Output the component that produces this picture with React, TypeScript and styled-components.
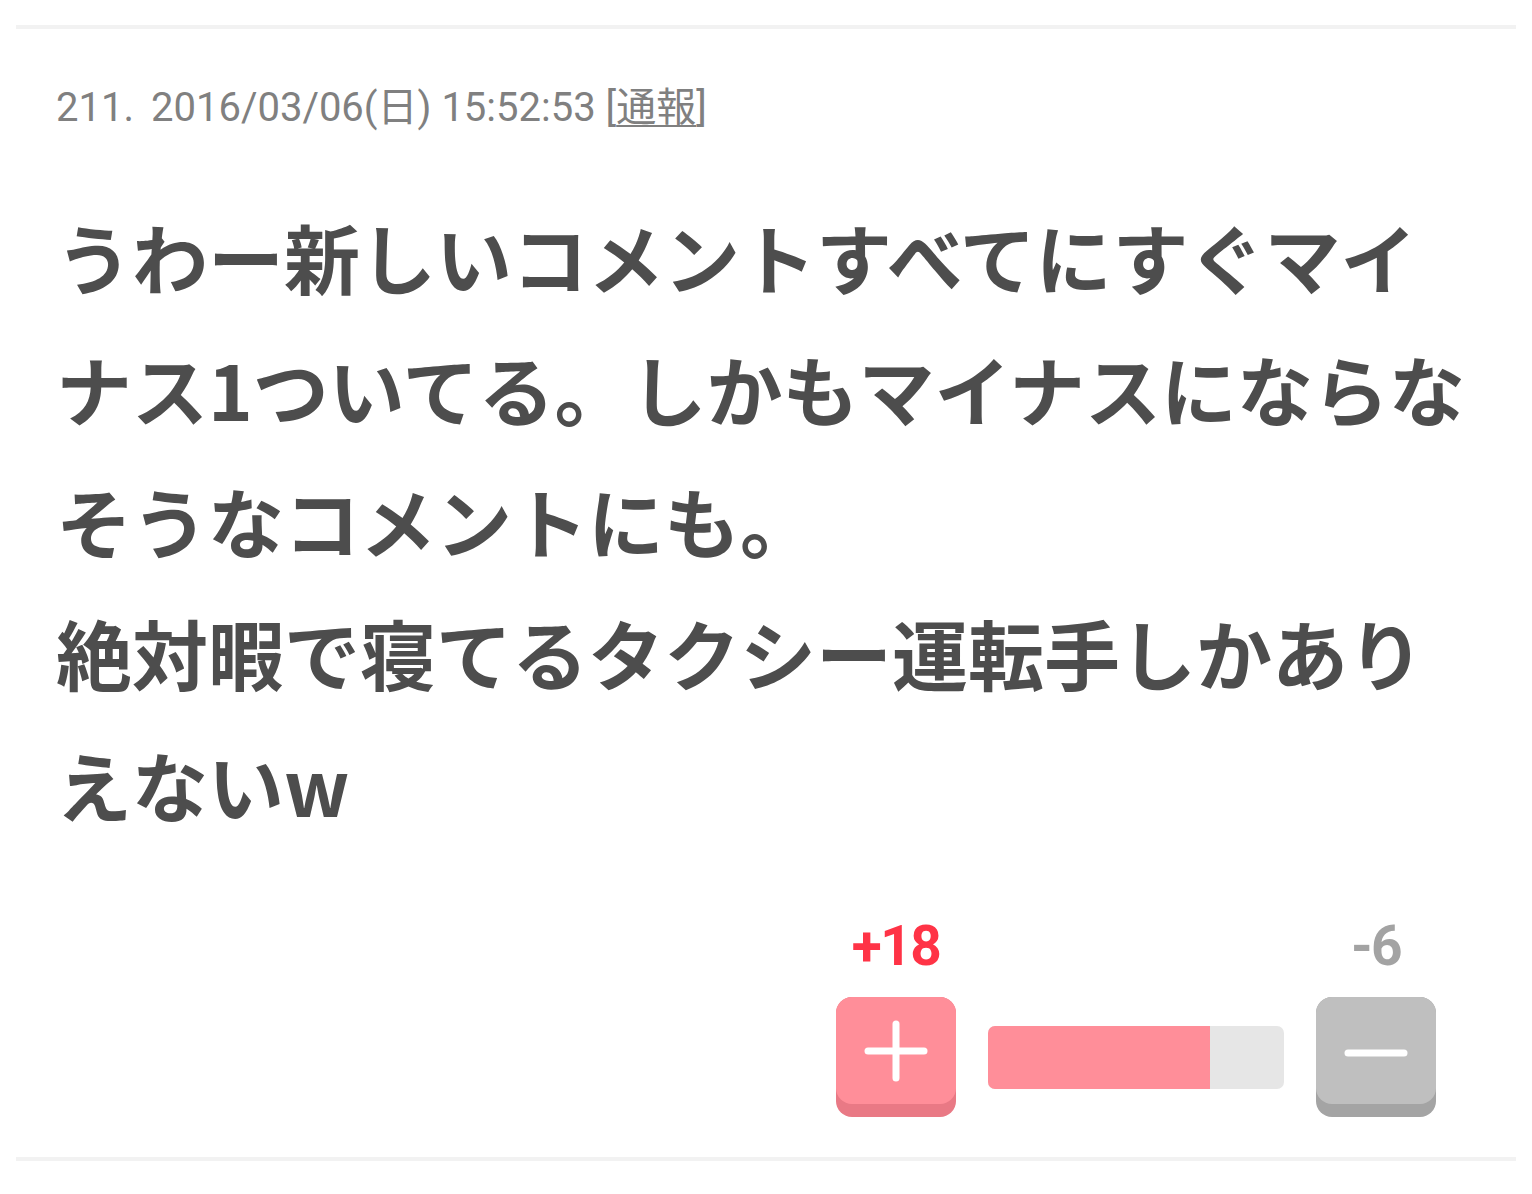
import React from "react"
import styled, { createGlobalStyle } from "styled-components"

const GlobalStyle = createGlobalStyle`
  html, body {
    margin: 0;
    padding: 0;
    background: #ffffff;
  }
`

const Page = styled.div`
  padding-top: 25px;
  padding-left: 16px;
  padding-right: 16px;
`

const Comment = styled.article`
  border-top: 4px solid #f2f2f2;
  border-bottom: 4px solid #f2f2f2;
  padding: 55px 44px 40px 40px;
`

const Meta = styled.div`
  font-family: Roboto, "Noto Sans CJK JP", sans-serif;
  font-size: 40px;
  line-height: 48px;
  height: 48px;
  color: #808080;
  white-space: nowrap;
`

const Num = styled.span`
  margin-right: 17px;
`

const Report = styled.a`
  color: #808080;
  text-decoration: none;

  span {
    text-decoration: underline;
    text-underline-offset: 4px;
    text-decoration-thickness: 2px;
  }
`

const Body = styled.p`
  margin: 58px 0 0;
  font-family: "Noto Sans CJK JP", "Noto Sans", sans-serif;
  font-weight: 700;
  font-size: 76px;
  line-height: 132px;
  color: #4d4d4d;
  white-space: pre-line;
  word-break: break-all;
`

const Votes = styled.div`
  margin-top: 66px;
  display: flex;
  justify-content: flex-end;
  padding-right: 36px;
`

const VoteGrid = styled.div`
  display: grid;
  grid-template-columns: 120px 296px 120px;
  grid-template-rows: 60px 120px;
  column-gap: 32px;
  row-gap: 21px;
`

const Count = styled.div<{ $tone: "plus" | "minus"; $col: number }>`
  grid-column: ${(p) => p.$col};
  grid-row: 1;
  text-align: center;
  font-family: Roboto, sans-serif;
  font-weight: 700;
  font-size: 55px;
  line-height: 60px;
  letter-spacing: -1.5px;
  color: ${(p) => (p.$tone === "plus" ? "#ff3346" : "#a3a3a3")};
`

const VoteButton = styled.button<{ $tone: "plus" | "minus"; $col: number }>`
  grid-row: 2;
  grid-column: ${(p) => p.$col};
  width: 120px;
  height: 120px;
  border: 0;
  padding: 0 0 13px;
  border-radius: 16px;
  cursor: pointer;
  background: ${(p) => (p.$tone === "plus" ? "#e97985" : "#a4a4a4")};
  display: flex;
  align-items: flex-start;
`

const Face = styled.span<{ $tone: "plus" | "minus" }>`
  width: 120px;
  height: 107px;
  border-radius: 16px;
  background: ${(p) => (p.$tone === "plus" ? "#ff8e99" : "#bfbfbf")};
  display: flex;
  align-items: center;
  justify-content: center;
`

const Meter = styled.div`
  grid-row: 2;
  grid-column: 2;
  align-self: center;
  height: 63px;
  border-radius: 7px;
  background: #e6e6e6;
  overflow: hidden;
  display: flex;
`

const MeterFill = styled.div`
  height: 100%;
  background: #ff8e99;
`

const PlusIcon = () => (
  <svg width="64" height="64" viewBox="0 0 64 64">
    <g stroke="#ffffff" strokeWidth="7" strokeLinecap="round">
      <line x1="4" y1="32" x2="60" y2="32" />
      <line x1="32" y1="5" x2="32" y2="59" />
    </g>
  </svg>
)

const MinusIcon = () => (
  <svg width="64" height="64" viewBox="0 0 64 64">
    <line x1="4" y1="34" x2="60" y2="34" stroke="#ffffff" strokeWidth="7" strokeLinecap="round" />
  </svg>
)

const plus = 18
const minus = 6

export default function App() {
  const ratio = (plus / (plus + minus)) * 100
  return (
    <>
      <GlobalStyle />
      <Page>
        <Comment>
          <Meta>
            <Num>211.</Num>2016/03/06(日) 15:52:53{" "}
            <Report href="#">
              [<span>通報</span>]
            </Report>
          </Meta>
          <Body>
            {"うわー新しいコメントすべてにすぐマイナス1ついてる。しかもマイナスにならなそうなコメントにも。\n絶対暇で寝てるタクシー運転手しかありえないw"}
          </Body>
          <Votes>
            <VoteGrid>
              <Count $tone="plus" $col={1}>+{plus}</Count>
              <Count $tone="minus" $col={3}>-{minus}</Count>
              <VoteButton $tone="plus" $col={1}>
                <Face $tone="plus">
                  <PlusIcon />
                </Face>
              </VoteButton>
              <Meter>
                <MeterFill style={{ width: `${ratio}%` }} />
              </Meter>
              <VoteButton $tone="minus" $col={3}>
                <Face $tone="minus">
                  <MinusIcon />
                </Face>
              </VoteButton>
            </VoteGrid>
          </Votes>
        </Comment>
      </Page>
    </>
  )
}
